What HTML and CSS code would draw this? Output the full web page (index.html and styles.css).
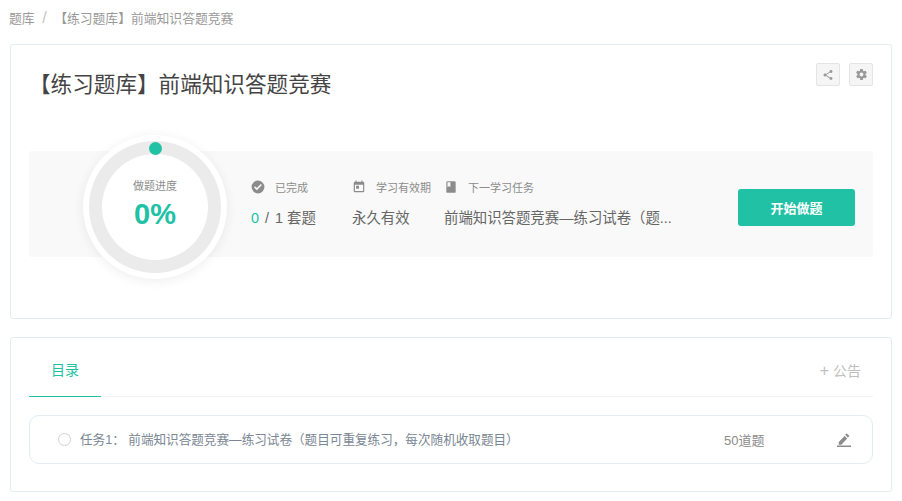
FILE: index.html
```html
<!DOCTYPE html>
<html>
<head>
  <meta charset="UTF-8">
  <title>前端知识答题竞赛</title>
  <link rel="stylesheet" href="styles.css">
</head>
<body>
  <div class="crumb">
    <span>题库</span>
    <span class="crumb-sep">/</span>
    <span>【练习题库】前端知识答题竞赛</span>
  </div>

  <div class="card card-top">
    <div class="title-row">
      <h1>【练习题库】前端知识答题竞赛</h1>
      <div class="tools">
        <span class="tool">
          <svg width="12" height="12" viewBox="0 0 24 24"><path fill="#999" d="M18 16.1c-.8 0-1.5.3-2 .8L8.900 12.700c.1-.2.1-.5.1-.7s0-.5-.1-.7l7-4.100c.5.5 1.300.8 2.100.8 1.700 0 3-1.300 3-3s-1.300-3-3-3-3 1.300-3 3c0 .2 0 .5.1.7l-7 4.100C7.500 9.300 6.800 9 6 9c-1.700 0-3 1.300-3 3s1.300 3 3 3c.8 0 1.500-.3 2-.8l7.100 4.200c-.1.2-.1.400-.1.600 0 1.600 1.300 2.900 3 2.900s3-1.300 3-2.900-1.300-2.900-3-2.900z"/></svg>
        </span>
        <span class="tool">
          <svg width="13" height="13" viewBox="0 0 24 24"><path fill="#999" d="M19.400 13c.1-.3.100-.7.100-1s0-.7-.1-1l2.100-1.600c.2-.2.2-.4.100-.6l-2-3.500c-.1-.2-.4-.3-.6-.2l-2.500 1c-.5-.4-1.100-.7-1.700-1l-.4-2.700c0-.2-.2-.4-.5-.4h-4c-.2 0-.4.2-.5.400l-.4 2.700c-.6.200-1.100.6-1.700 1l-2.500-1c-.2-.1-.5 0-.6.200l-2 3.500c-.1.200-.1.500.1.600L4.600 11c0 .3-.1.700-.1 1s0 .7.100 1l-2.100 1.600c-.2.200-.2.400-.1.600l2 3.500c.1.200.4.300.6.200l2.500-1c.5.400 1.100.7 1.700 1l.4 2.700c0 .2.200.4.500.4h4c.2 0 .5-.2.500-.4l.4-2.700c.6-.2 1.100-.6 1.700-1l2.500 1c.2.100.5 0 .6-.2l2-3.500c.1-.2.100-.5-.1-.6zM12 15.500c-1.900 0-3.500-1.600-3.500-3.500s1.600-3.500 3.500-3.500 3.500 1.600 3.500 3.500-1.600 3.500-3.500 3.500z"/></svg>
        </span>
      </div>
    </div>

    <div class="strip">
      <div class="ring-wrap">
        <div class="ring">
          <span class="ring-dot"></span>
          <div class="ring-inner">
            <div class="ring-label">做题进度</div>
            <div class="ring-value">0%</div>
          </div>
        </div>
      </div>

      <div class="stat stat-done">
        <div class="stat-head">
          <svg width="14" height="14" viewBox="0 0 24 24"><path fill="#8c8c8c" d="M12 1a11 11 0 1 0 0 22 11 11 0 0 0 0-22zm-2 16.400L5.300 12.700l1.800-1.800L10 13.800l6.900-6.900 1.800 1.800z"/></svg>
          <span>已完成</span>
        </div>
        <div class="stat-val"><span class="green">0</span> <span class="slash">/</span> 1 套题</div>
      </div>

      <div class="stat stat-date">
        <div class="stat-head">
          <svg width="14" height="14" viewBox="0 0 24 24"><path fill="#8c8c8c" d="M19 3h-1V1h-2v2H8V1H6v2H5a2 2 0 0 0-2 2v14a2 2 0 0 0 2 2h14a2 2 0 0 0 2-2V5a2 2 0 0 0-2-2zm0 16H5V8h14zM7 10h5v5H7z"/></svg>
          <span>学习有效期</span>
        </div>
        <div class="stat-val">永久有效</div>
      </div>

      <div class="stat stat-next">
        <div class="stat-head">
          <svg width="14" height="14" viewBox="0 0 24 24"><path fill="#8c8c8c" d="M18 2H6a2 2 0 0 0-2 2v16a2 2 0 0 0 2 2h12a2 2 0 0 0 2-2V4a2 2 0 0 0-2-2zM6 4h5v8L8.500 10.500 6 12z"/></svg>
          <span>下一学习任务</span>
        </div>
        <div class="stat-val">前端知识答题竞赛—练习试卷（题...</div>
      </div>

      <button class="start">开始做题</button>
    </div>
  </div>

  <div class="card card-list">
    <div class="tabs">
      <div class="tab-active">目录</div>
      <div class="notice"><span class="notice-plus">+</span> 公告</div>
    </div>
    <div class="task">
      <span class="task-dot"></span>
      <span class="task-name">任务1： 前端知识答题竞赛—练习试卷（题目可重复练习，每次随机收取题目）</span>
      <span class="task-count">50道题</span>
      <svg class="task-edit" width="14" height="14" viewBox="0 0 24 24"><path fill="#8c8c8c" d="M3 15.500V20h4.500L17.500 9.500 13 5zM20.500 6.500c.6-.6.6-1.500 0-2.100l-2.900-2.900c-.6-.6-1.500-.6-2.100 0L14 3l4.500 4.500zM0 21.500h24V24H0z"/></svg>
    </div>
  </div>
</body>
</html>
```

FILE: styles.css
```css
body {
  margin: 0;
  padding: 0 10px;
  background-color: #fff;
  font-family: "Liberation Sans", "Noto Sans CJK SC", sans-serif;
  color: #555;
}

.crumb {
  height: 44px;
  margin-left: -1px;
  line-height: 35px;
  font-size: 12.800px;
  color: #999;
}

.crumb-sep {
  margin: 0 4px 0 4px;
  font-size: 16px;
  color: #c4c4c4;
}

.card {
  border: 1px solid #e3ecf3;
  border-radius: 3px;
  box-sizing: border-box;
}

.card-top {
  height: 275px;
  padding: 0 18px;
}

.title-row {
  display: flex;
  justify-content: space-between;
  height: 106px;
}

h1 {
  margin: 22px 0 0;
  font-size: 21.600px;
  font-weight: 400;
  line-height: 36px;
  color: #444;
}

.tools {
  display: flex;
  gap: 9px;
  margin-top: 18px;
}

.tool {
  display: flex;
  align-items: center;
  justify-content: center;
  width: 24px;
  height: 23px;
  box-sizing: border-box;
  background-color: #f5f5f5;
  border: 1px solid #e4e4e4;
  border-radius: 2px;
}

.strip {
  display: flex;
  align-items: center;
  height: 106px;
  background-color: #f9f9f9;
  border-radius: 3px;
}

.ring-wrap {
  flex: none;
  margin: -16px 0 -22px 54px;
  width: 144px;
  height: 144px;
  box-sizing: border-box;
  padding: 6px;
  background-color: #fff;
  border-radius: 50%;
  box-shadow: 0 2px 12px rgba(0, 0, 0, 0.07);
}

.ring {
  position: relative;
  box-sizing: border-box;
  width: 132px;
  height: 132px;
  padding: 13px;
  background-color: #ebebeb;
  border-radius: 50%;
}

.ring-dot {
  position: absolute;
  top: 1px;
  left: 59.500px;
  width: 13px;
  height: 13px;
  background-color: #20c1a5;
  border-radius: 50%;
}

.ring-inner {
  height: 106px;
  background-color: #fff;
  border-radius: 50%;
  text-align: center;
  padding-top: 24px;
  box-sizing: border-box;
}

.ring-label {
  font-size: 11px;
  line-height: 16px;
  color: #8c8c8c;
}

.ring-value {
  font-size: 29px;
  line-height: 40px;
  font-weight: 700;
  color: #20c1a5;
}

.stat {
  flex: none;
  margin-top: -1px;
}

.stat-done {
  width: 101px;
  margin-left: 24px;
}

.stat-date {
  width: 92px;
}

.stat-next {
  width: 228px;
}

.stat-head {
  display: flex;
  align-items: center;
  gap: 10px;
  height: 14px;
  font-size: 11px;
  color: #8c8c8c;
}

.stat-val {
  margin-top: 14px;
  font-size: 14.400px;
  line-height: 20px;
  white-space: nowrap;
  color: #666;
}

.slash {
  margin: 0 2px;
}

.green {
  color: #20c1a5;
}

.start {
  flex: none;
  width: 117px;
  height: 37px;
  margin: 7px 0 0 66px;
  padding: 0;
  background-color: #20c1a5;
  border: 0;
  border-radius: 3px;
  font-family: inherit;
  font-size: 13px;
  font-weight: 700;
  color: #fff;
}

.card-list {
  height: 155px;
  margin-top: 18px;
  padding: 0 18px;
}

.tabs {
  display: flex;
  justify-content: space-between;
  height: 58px;
  border-bottom: 1px solid #f0f3f6;
}

.tab-active {
  width: 72px;
  height: 58px;
  box-sizing: content-box;
  border-bottom: 1px solid #20c1a5;
  text-align: center;
  font-size: 14px;
  line-height: 65px;
  color: #20c1a5;
}

.notice {
  padding-right: 12px;
  font-size: 14px;
  line-height: 65px;
  color: #bfbfbf;
}

.notice-plus {
  font-size: 16px;
  font-weight: 300;
}

.task {
  display: flex;
  align-items: center;
  height: 49px;
  box-sizing: border-box;
  margin-top: 18px;
  padding: 0 21px 0 28px;
  border: 1px solid #e3ecf3;
  border-radius: 10px;
}

.task-dot {
  flex: none;
  width: 13px;
  height: 13px;
  box-sizing: border-box;
  border: 1.500px solid #d2d2d2;
  border-radius: 50%;
}

.task-name {
  flex: 1;
  margin-left: 9px;
  margin-bottom: 2px;
  font-size: 12.600px;
  color: #7a8794;
}

.task-count {
  width: 113px;
  font-size: 13px;
  color: #8c8c8c;
}
```
